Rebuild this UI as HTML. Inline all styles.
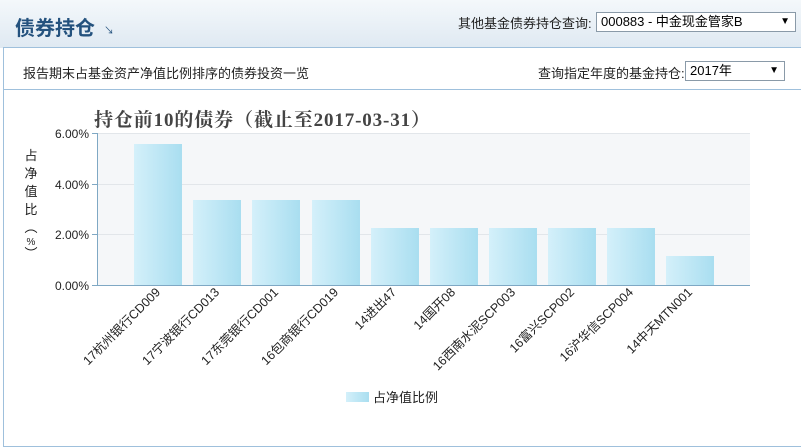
<!DOCTYPE html>
<html><head><meta charset="utf-8"><style>
body{margin:0;width:801px;height:435px;overflow:hidden;background:#fff;font-family:"Liberation Sans","Noto Sans CJK SC",sans-serif;position:relative}
.hdr{position:absolute;left:0;top:0;width:801px;height:48px;background:linear-gradient(#f4f8fb,#dfe9f2)}
.title{position:absolute;left:15px;top:12px;font-size:20px;font-weight:bold;color:#24527e}
.arr{position:absolute;left:104px;top:22px;font-size:10px;color:#24527e}
.sel{position:absolute;border:1px solid #8a9aa8;background:#fff;font-size:13px;color:#000;height:19px;line-height:19px;padding-left:4px;box-sizing:border-box}
.sel b{position:absolute;right:5px;top:0;font-size:10px}
.panel{position:absolute;left:3px;top:47px;width:798px;height:400px;border:1px solid #9fc0dc;border-right:none;box-sizing:border-box}
.sep{position:absolute;left:3px;top:89px;width:798px;height:1px;background:#9fc0dc}
.t{position:absolute;font-size:13px;color:#222}
</style></head><body>
<div class="hdr"></div>
<div class="title">债券持仓</div><div class="arr">↘</div>
<div class="t" style="left:458px;top:13px">其他基金债券持仓查询:</div>
<div class="sel" style="left:596px;top:12px;width:200px;height:20px;line-height:18px">000883 - 中金现金管家B<b>▼</b></div>
<div class="panel"></div><div class="sep"></div>
<div class="t" style="left:23px;top:63px">报告期末占基金资产净值比例排序的债券投资一览</div>
<div class="t" style="left:538px;top:63px">查询指定年度的基金持仓:</div>
<div class="sel" style="left:685px;top:61px;width:100px;height:20px;line-height:18px">2017年<b>▼</b></div>
<svg width="801" height="435" style="position:absolute;left:0;top:0" font-family="Liberation Sans,Noto Sans CJK SC,sans-serif">
<defs><linearGradient id="g" x1="0" x2="1"><stop offset="0" stop-color="#d4f0fa"/><stop offset="1" stop-color="#a9def0"/></linearGradient></defs>
<rect x="97" y="133" width="653" height="152" fill="#f5f7f9"/>
<g stroke="#e2e6ea"><line x1="97" y1="133.5" x2="750" y2="133.5"/><line x1="97" y1="184.5" x2="750" y2="184.5"/><line x1="97" y1="234.5" x2="750" y2="234.5"/></g>
<line x1="97.5" y1="133" x2="97.5" y2="285" stroke="#7fa8c4"/>
<line x1="97" y1="285.5" x2="750" y2="285.5" stroke="#7fa8c4"/>
<g stroke="#7fa8c4"><line x1="92" y1="133.5" x2="97" y2="133.5"/><line x1="92" y1="184.5" x2="97" y2="184.5"/><line x1="92" y1="234.5" x2="97" y2="234.5"/><line x1="92" y1="285.5" x2="97" y2="285.5"/></g>
<g font-size="12" fill="#222" text-anchor="end"><text x="89" y="138">6.00%</text><text x="89" y="189">4.00%</text><text x="89" y="239">2.00%</text><text x="89" y="290">0.00%</text></g>
<text x="94" y="126" font-size="19" font-weight="bold" fill="#444" textLength="336" font-family="Liberation Serif,Noto Serif CJK SC,serif">持仓前10的债券（截止至2017-03-31）</text>
<g font-size="13" fill="#222" text-anchor="middle"><text x="31" y="160">占</text><text x="31" y="178">净</text><text x="31" y="196">值</text><text x="31" y="214">比</text><text x="31" y="232">︵</text><text x="31" y="245" font-size="10">%</text><text x="31" y="258">︶</text></g>
<g fill="url(#g)">
<rect x="134" y="144" width="48" height="141"/>
<rect x="193" y="200" width="48" height="85"/>
<rect x="252" y="200" width="48" height="85"/>
<rect x="312" y="200" width="48" height="85"/>
<rect x="371" y="228" width="48" height="57"/>
<rect x="430" y="228" width="48" height="57"/>
<rect x="489" y="228" width="48" height="57"/>
<rect x="548" y="228" width="48" height="57"/>
<rect x="607" y="228" width="48" height="57"/>
<rect x="666" y="256" width="48" height="29"/>
</g>
<g font-size="12.5" fill="#222" text-anchor="end">
<text transform="translate(161,293) rotate(-45)">17杭州银行CD009</text>
<text transform="translate(220,293) rotate(-45)">17宁波银行CD013</text>
<text transform="translate(279,293) rotate(-45)">17东莞银行CD001</text>
<text transform="translate(339,293) rotate(-45)">16包商银行CD019</text>
<text transform="translate(397,293) rotate(-45)">14进出47</text>
<text transform="translate(456,293) rotate(-45)">14国开08</text>
<text transform="translate(516,293) rotate(-45)">16西南水泥SCP003</text>
<text transform="translate(575,293) rotate(-45)">16富兴SCP002</text>
<text transform="translate(634,293) rotate(-45)">16沪华信SCP004</text>
<text transform="translate(693,293) rotate(-45)">14中天MTN001</text>
</g>
<rect x="346" y="392" width="23" height="10" fill="url(#g)"/>
<text x="373" y="402" font-size="13" fill="#222">占净值比例</text>
</svg>
</body></html>
